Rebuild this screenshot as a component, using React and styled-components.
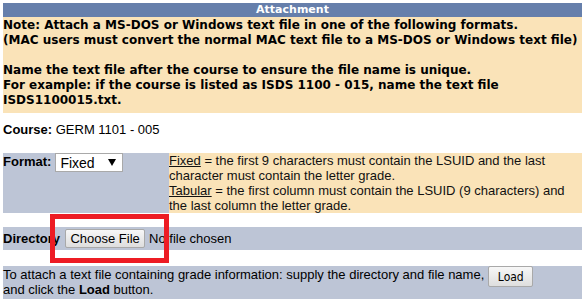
import React from 'react';
import styled, {createGlobalStyle} from 'styled-components';

const Global = createGlobalStyle`
body{
  margin:0;
  background:#fff;
  font-family:"Liberation Sans", Arial, sans-serif;
  font-size:13px;
  color:#000;
}
`

const Page = styled.div`
position:relative;
width:579px;
padding:3px 3px 0 3px;
`

const Header = styled.div`
height:14px;
line-height:14px;
background:#667fab;
color:#fff;
text-align:center;
font-family:"DejaVu Sans", Verdana, sans-serif;
font-weight:bold;
font-size:11px;
`

const Note = styled.div`
background:#fae3b8;
padding:1px 0 5px 0;
font-family:"DejaVu Sans", Verdana, sans-serif;
font-weight:bold;
font-size:12px;
line-height:15px;
white-space:nowrap;
`

const Course = styled.div`
padding:9px 0 16px 0;
line-height:15px;
`

const FormatRow = styled.div`
display:grid;
grid-template-columns:166px 1fr;
height:59px;
`

const FormatCell = styled.div`
background:#bdc5d6;
display:flex;
align-items:flex-start;
gap:4px;
`

const Label = styled.b`
line-height:15px;
margin-top:${props => props.top || 0}px;
`

const SelectBox = styled.div`
border:1px solid #a9a9a9;
background:#fff;
display:flex;
align-items:center;
justify-content:space-between;
padding:0 6px 0 4px;
box-sizing:border-box;
width:68px;
height:19px;
font-size:14px;
`

const Arrow = styled.span`
width:0;
height:0;
border-left:4px solid transparent;
border-right:4px solid transparent;
border-top:7px solid #000;
`

const Desc = styled.div`
background:#fae3b8;
line-height:15px;
white-space:nowrap;
color:#111;
`

const U = styled.span`
text-decoration:underline;
`

const DirRow = styled.div`
margin-top:15px;
height:23px;
background:#bdc5d6;
display:flex;
align-items:center;
gap:4px;
`

const FileBtn = styled.button`
width:80px;
height:19px;
padding:0;
margin-left:1px;
font-family:"Liberation Sans", Arial, sans-serif;
font-size:13px;
color:#000;
border:1px solid #a9a9a9;
border-radius:2px;
background:linear-gradient(#f7f7f7, #dedede);
`

const LoadRow = styled.div`
margin-top:16px;
background:#bdc5d6;
line-height:15px;
padding:1px 0 4px 0;
white-space:nowrap;
`

const LoadBtn = styled.button`
width:45px;
height:21px;
padding:0;
margin:-1px 0 -7px 4px;
vertical-align:top;
font-family:"DejaVu Sans Condensed", "DejaVu Sans", Tahoma, sans-serif;
font-size:12px;
color:#000;
border:1px solid #a9a9a9;
border-radius:2px;
background:linear-gradient(#f7f7f7, #dedede);
`

const Highlight = styled.div`
position:absolute;
left:50px;
top:214px;
width:119px;
height:49px;
box-sizing:border-box;
border:5px solid #ed1c24;
pointer-events:none;
`

export default function App() {
  return <Page>
    <Global/>
    <Header>Attachment</Header>
    <Note>
      Note: Attach a MS-DOS or Windows text file in one of the following formats.<br/>
      (MAC users must convert the normal MAC text file to a MS-DOS or Windows text file)<br/>
      <br/>
      Name the text file after the course to ensure the file name is unique.<br/>
      For example: if the course is listed as ISDS 1100 - 015, name the text file<br/>
      ISDS1100015.txt.
    </Note>
    <Course><b>Course:</b> GERM 1101 - 005</Course>
    <FormatRow>
      <FormatCell>
        <Label top={1}>Format:</Label>
        <SelectBox>Fixed<Arrow/></SelectBox>
      </FormatCell>
      <Desc>
        <U>Fixed</U> = the first 9 characters must contain the LSUID and the last<br/>
        character must contain the letter grade.<br/>
        <U>Tabular</U> = the first column must contain the LSUID (9 characters) and<br/>
        the last column the letter grade.
      </Desc>
    </FormatRow>
    <DirRow>
      <Label>Directory</Label>
      <FileBtn>Choose File</FileBtn>
      <span>No file chosen</span>
    </DirRow>
    <LoadRow>
      To attach a text file containing grade information: supply the directory and file name,
      <LoadBtn>Load</LoadBtn><br/>
      and click the <b>Load</b> button.
    </LoadRow>
    <Highlight/>
  </Page>;
}
